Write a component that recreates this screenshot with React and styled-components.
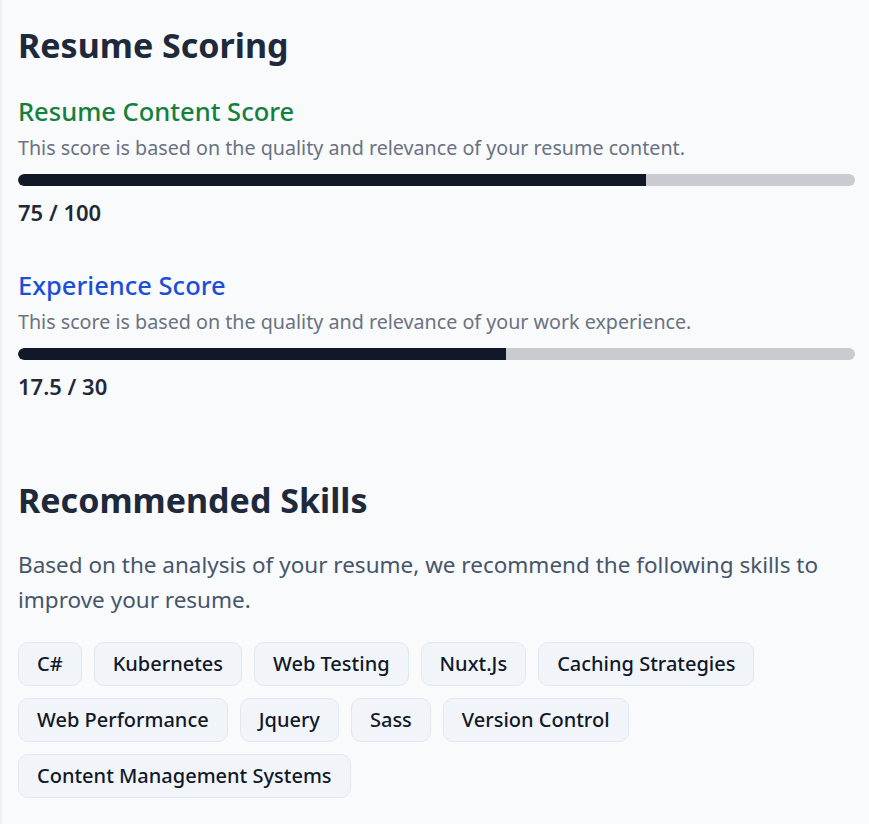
import React from "react";
import styled, { createGlobalStyle } from "styled-components";

const Global = createGlobalStyle`
  html, body { margin: 0; padding: 0; background: #f8fafc; }
  body { font-family: "Noto Sans", "Open Sans", sans-serif; }
`;

const Page = styled.div`
  min-height: 824px;
  box-sizing: border-box;
  padding: 22px 14px 20px 18px;
  background: #f8fafc;
  box-shadow: inset 3px 0 3px -2px rgba(0, 0, 0, 0.08);
`;

const Section = styled.section`
  display: flex;
  flex-direction: column;
`;

const MainTitle = styled.h1`
  margin: 0 0 26px;
  font-size: 34px;
  line-height: 46px;
  font-weight: 700;
  color: #1e293b;
`;

const ScoreBlock = styled.div`
  display: flex;
  flex-direction: column;
  margin-bottom: ${(p) => p.$mb || 0}px;
`;

const ScoreTitle = styled.h2`
  margin: 0 0 6px;
  font-size: 25.5px;
  line-height: 34px;
  font-weight: 500;
  color: ${(p) => p.$color};
`;

const ScoreDesc = styled.p`
  margin: 0 0 12px;
  font-size: 19.7px;
  line-height: 28px;
  color: #6b7280;
`;

const Track = styled.div`
  height: 12px;
  border-radius: 6px;
  background: #c9cbd1;
  overflow: hidden;
`;

const Fill = styled.div`
  height: 100%;
  background: #111827;
  border-radius: 6px 0 0 6px;
`;

const ScoreValue = styled.div`
  margin-top: 10.5px;
  font-size: 22px;
  line-height: 30px;
  font-weight: 600;
  color: #1f2937;
`;

const SkillsTitle = styled.h2`
  margin: 76.5px 0 23.5px;
  font-size: 34px;
  line-height: 46px;
  font-weight: 700;
  color: #1e293b;
`;

const SkillsDesc = styled.p`
  margin: 0 0 24px;
  font-size: 22.5px;
  line-height: 35.6px;
  color: #475569;
`;

const Tags = styled.div`
  display: flex;
  flex-wrap: wrap;
  gap: 12px;
`;

const Tag = styled.span`
  display: inline-flex;
  align-items: center;
  height: 44px;
  box-sizing: border-box;
  padding: 0 18px;
  border: 1px solid #e2e8f0;
  border-radius: 10px;
  background: #f1f5f9;
  font-size: 20px;
  font-weight: 500;
  color: #111827;
`;

const scores = [
  {
    title: "Resume Content Score",
    color: "#15803d",
    desc: "This score is based on the quality and relevance of your resume content.",
    value: 75,
    max: 100,
  },
  {
    title: "Experience Score",
    color: "#1d4ed8",
    desc: "This score is based on the quality and relevance of your work experience.",
    value: 17.5,
    max: 30,
  },
];

const skills = [
  "C#",
  "Kubernetes",
  "Web Testing",
  "Nuxt.Js",
  "Caching Strategies",
  "Web Performance",
  "Jquery",
  "Sass",
  "Version Control",
  "Content Management Systems",
];

export default function App() {
  return (
    <>
      <Global />
      <Page>
        <Section>
          <MainTitle>Resume Scoring</MainTitle>
          {scores.map((s, i) => (
            <ScoreBlock key={s.title} $mb={i === 0 ? 41.5 : 0}>
              <ScoreTitle $color={s.color}>{s.title}</ScoreTitle>
              <ScoreDesc>{s.desc}</ScoreDesc>
              <Track>
                <Fill style={{ width: `${(s.value / s.max) * 100}%` }} />
              </Track>
              <ScoreValue>
                {s.value} / {s.max}
              </ScoreValue>
            </ScoreBlock>
          ))}
        </Section>
        <Section>
          <SkillsTitle>Recommended Skills</SkillsTitle>
          <SkillsDesc>
            Based on the analysis of your resume, we recommend the following skills to improve your resume.
          </SkillsDesc>
          <Tags>
            {skills.map((s) => (
              <Tag key={s}>{s}</Tag>
            ))}
          </Tags>
        </Section>
      </Page>
    </>
  );
}
